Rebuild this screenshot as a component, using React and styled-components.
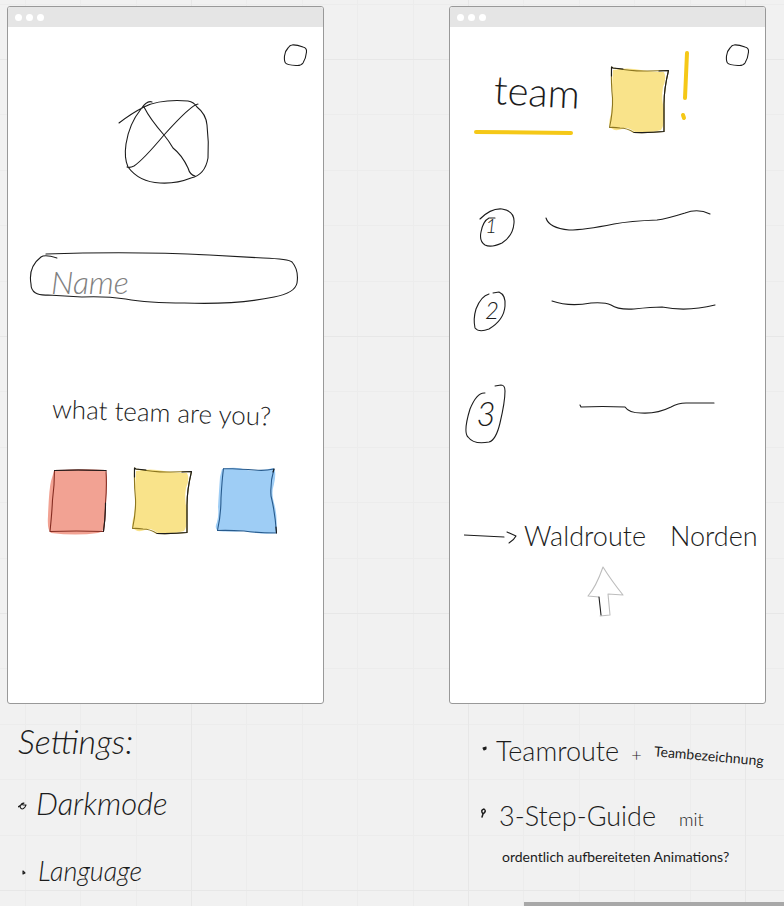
import React from 'react';
import styled, { createGlobalStyle } from 'styled-components';

const INK = '#1c1c1c';
const YELLOW = '#f5c817';

const GlobalStyle = createGlobalStyle`
  *, *::before, *::after { box-sizing: border-box; }
  body {
    margin: 0;
    color: ${INK};
    font-family: Lato, "Open Sans", sans-serif;
    font-weight: 300;
    background-color: #f1f1f1;
  }
`;

const Board = styled.div`
  min-height: 100vh;
  display: flex;
  flex-direction: column;
  background-image:
    linear-gradient(to right, #e7e7e7 1px, transparent 1px),
    linear-gradient(to bottom, #e7e7e7 1px, transparent 1px),
    linear-gradient(to right, transparent 55px, #ececec 55px 56px, transparent 56px 111px, #ececec 111px 112px, transparent 112px 166px, #ececec 166px 167px, transparent 167px 222px, #ececec 222px 223px, transparent 223px),
    linear-gradient(to bottom, transparent 55px, #ececec 55px 56px, transparent 56px 111px, #ececec 111px 112px, transparent 112px 166px, #ececec 166px 167px, transparent 167px 222px, #ececec 222px 223px, transparent 223px);
  background-size: 277px 277px;
  background-position: 191px 59px;
`;

const Columns = styled.main`
  display: grid;
  grid-template-columns: 1fr 1fr;
  column-gap: 125px;
  padding: 6px 18px 0 7px;
`;

const Column = styled.section`
  min-width: 0;
`;

const Frame = styled.article`
  border: 1px solid #999;
  border-radius: 3px;
  background: #fff;
  overflow: hidden;
`;

const TitleBar = styled.header`
  display: flex;
  align-items: center;
  gap: 4px;
  height: 20px;
  padding-left: 7px;
  background: #e5e5e5;
`;

const WindowDot = styled.span`
  width: 7px;
  height: 7px;
  border-radius: 50%;
  background: #fff;
`;

const Screen = styled.div`
  display: flex;
  flex-direction: column;
  min-height: 676px;
  padding: 16px 15px 0 14px;
`;

const Drawing = styled.svg`
  display: block;
  flex: none;
  fill: none;
  stroke: ${(p) => p.$ink || INK};
  stroke-width: 1.1;
  stroke-linecap: round;
  stroke-linejoin: round;
`;

const PlainButton = styled.button`
  flex: none;
  padding: 0;
  border: 0;
  background: none;
  cursor: pointer;
`;

const TopRow = styled.div`
  display: flex;
  justify-content: flex-end;
`;

const LogoRow = styled.div`
  display: flex;
  justify-content: center;
  margin-top: 31px;
`;

const Field = styled.label`
  display: grid;
  margin: 64px 9px 0 6px;
  > * { grid-area: 1 / 1; }
`;

const NameInput = styled.input`
  width: 100%;
  height: 54px;
  padding: 8px 23px 0;
  border: 0;
  outline: 0;
  background: none;
  color: ${INK};
  font: italic 300 32px Lato, sans-serif;
  &::placeholder { color: #808080; opacity: 1; }
`;

const Question = styled.h2`
  margin: 92px 30px 0 30px;
  font-size: 26px;
  font-weight: 300;
  line-height: 32px;
  white-space: nowrap;
  transform: rotate(2deg);
`;

const Swatches = styled.div`
  display: flex;
  gap: 18px;
  margin: 37px 0 0 24px;
`;

const TitleRow = styled.div`
  display: flex;
  align-items: flex-start;
  padding-left: 10px;
`;

const TeamTitle = styled.h1`
  margin: 26px 0 0;
  padding-left: 20px;
  width: 112px;
  font-size: 40px;
  font-weight: 300;
  line-height: 44px;
  transform: rotate(3deg);
`;

const Underline = styled.div`
  margin-top: 14px;
`;

const TitleMark = styled.div`
  display: flex;
  flex: 1;
  gap: 5px;
  margin-left: 21px;
`;

const MarkSwatch = styled.div`
  margin-top: 21px;
`;

const Steps = styled.ol`
  display: grid;
  gap: 20px;
  margin: 54px 0 0;
  padding: 0;
  list-style: none;
`;

const Step = styled.li`
  display: flex;
  gap: 22px;
`;

const StepNumber = styled.text`
  fill: ${INK};
  stroke: none;
  font-size: ${(p) => p.$size}px;
  font-style: italic;
  text-anchor: middle;
`;

const Route = styled.a`
  display: flex;
  align-items: center;
  gap: 6px;
  margin-top: 74px;
  color: inherit;
  font-size: 27px;
  line-height: 32px;
  white-space: nowrap;
  text-decoration: none;
`;

const RouteName = styled.span`
  display: flex;
  gap: 24px;
`;

const Pointer = styled.div`
  display: flex;
  justify-content: center;
  margin-top: 12px;
  padding-right: 2px;
`;

const Notes = styled.div`
  padding: ${(p) => p.$top}px 0 0 ${(p) => p.$left}px;
  white-space: nowrap;
`;

const NotesTitle = styled.h2`
  margin: 0 0 22px;
  font-size: 34px;
  font-style: italic;
  font-weight: 300;
  line-height: 40px;
`;

const NoteList = styled.ul`
  display: grid;
  gap: ${(p) => p.$gap}px;
  margin: 0;
  padding: 0;
  list-style: none;
`;

const Note = styled.li`
  display: flex;
  gap: ${(p) => p.$gap}px;
  font-size: ${(p) => p.$size}px;
  font-style: ${(p) => (p.$italic ? 'italic' : 'normal')};
  line-height: 40px;
`;

const NoteLine = styled.div`
  display: flex;
  align-items: baseline;
  gap: ${(p) => p.$gap}px;
`;

const Aside = styled.span`
  font-size: ${(p) => p.$size || 18}px;
  font-weight: ${(p) => (p.$size ? 400 : 300)};
`;

const Slanted = styled(Aside)`
  transform: rotate(5deg);
`;

const Detail = styled.p`
  margin: 6px 0 0 3px;
  font-size: 14px;
  font-weight: 400;
  line-height: 24px;
`;

const ScrollTrack = styled.div`
  align-self: flex-end;
  width: 260px;
  height: 4px;
  margin-top: auto;
  background: #a8a8a8;
`;

function Window({ children }) {
  return (
    <Frame>
      <TitleBar><WindowDot /><WindowDot /><WindowDot /></TitleBar>
      <Screen>{children}</Screen>
    </Frame>
  );
}

function SettingsButton() {
  return (
    <PlainButton type="button" aria-label="Settings">
      <Drawing width="26" height="24" viewBox="0 0 26 24">
        <path d="M10 2 Q14 1.500 21 4 Q25 5 24.500 9 Q24 15 21 20 Q19 23 14 22.500 Q5 22 3.500 20 Q2 18 2.500 13 Q3 8 6 5 Q8 2 10 2Z" />
      </Drawing>
    </PlainButton>
  );
}

const SWATCHES = {
  red: {
    fill: '#f2a293',
    paint: 'M8 6 Q30 3 58 5 Q61 6 61 18 Q60 40 59 56 Q59 67 52 68 Q30 71 5 68 Q1 65 2 51 Q3 24 5 16 Z',
    line: 'M8.500 5.500 Q30 4.500 60 5.500 Q61 22 59.500 38 Q59.500 52 57.500 66.500 Q30 65.500 4 66.500 Q6 47 6.500 35 Q8.500 20 8.500 5.500',
    edge: '#852d22',
    front: 'M8.500 5.500 Q30 4.500 60 5.500 M59.500 38 Q59.500 52 57.500 66.500',
  },
  yellow: {
    fill: '#f9e38a',
    paint: 'M6 6 Q20 3 34 6 Q48 8 57 8 Q60 14 56 23 Q54 35 57 45 Q58 61 54 66 Q44 69 28 68 Q20 62 15 65 Q7 68 3 63 Q1 60 4 50 Q6 35 5 22 Z',
    line: 'M4.500 3 L6 4 Q26 7.500 40 7 L61.500 6.500 Q57 25 57 40 L57 67.500 Q43 69 27 68.500 Q20 64 13 64 Q7 63 2.500 63.500 Q6 48 5.500 34 Q4 20 4.500 3',
    edge: '#8d7720',
    front: 'M52 7 L61.500 6.500 Q57 25 57 40 L57 67.500 Q43 69 27 68.500 M4.500 12 L4.500 3 L6 4 L16 5',
  },
  blue: {
    fill: '#9ecdf5',
    paint: 'M8 4 Q23 1 32 5 Q48 6 59 3 Q63 5 60 19 Q57 28 60 38 Q64 51 62 68 Q49 70 30 66 Q14 67 4 66 Q0 64 3 57 Q5 50 4 42 Q5 25 6 12 Z',
    line: 'M9.500 3.500 Q28 4 41 5 Q50 6 60 4 Q56 17 57 31 Q61 47 62.500 68 Q43 68 30 66 Q14 65 3.500 65.500 Q7 50 7 33 Q8 15 9.500 3.500',
    edge: '#285b8d',
    front: 'M59 7 L60 4 M62 62 L62.500 68',
  },
};

function Swatch({ color }) {
  const s = SWATCHES[color];
  return (
    <Drawing width="66" height="72" viewBox="0 0 66 72">
      <path d={s.paint} fill={s.fill} stroke="none" />
      <path d={s.line} stroke={s.edge} />
      <path d={s.front} />
    </Drawing>
  );
}

const STEPS = [
  {
    number: '1', x: 27, y: 43, size: 20,
    ring: 'M16 29 Q27 18 38 19 Q51 21 50 33 Q49 46 38 53 Q27 58 21 55 Q15 51 17 42 Q19 31 25 28 L31 28',
    line: 'M8 28 Q11 38 31 40 Q46 40 76 34 Q92 31 119 30 Q128 29 147 23 Q160 18 172 24',
  },
  {
    number: '2', x: 28, y: 37, size: 24,
    ring: 'M25 12 Q17 14 12 27 Q9 37 11 46 Q15 51 25 47 Q40 38 41 24 Q42 13 35 10 L29 11',
    line: 'M14 19 Q31 25 53 21 Q67 20 73 23 Q80 28 96 27 Q114 25 124 25 Q149 30 177 23',
  },
  {
    number: '3', x: 22, y: 52, size: 33,
    ring: 'M21 19 Q13 18 6 35 Q-1 58 4 63 Q10 71 25 68 Q32 66 36 49 Q41 28 41 17 Q41 11 37 11 L31 12',
    line: 'M42 31 L43 33 Q64 32 87 33 Q91 39 103 39 Q119 40 133 33 Q140 29 148 29 L176 29',
  },
];

export default function App() {
  return (
    <>
      <GlobalStyle />
      <Board>
        <Columns>
          <Column>
            <Window>
              <TopRow><SettingsButton /></TopRow>
              <LogoRow>
                <Drawing width="94" height="88" viewBox="0 0 94 88" role="img" aria-label="Logo">
                  <path d="M1 25 Q14 15 26 9 C40 2 57 2 70 3 Q76 4 79 9 Q88 16 89 27 Q91 44 90 60 Q87 77 73 80 Q58 86 42 85 Q21 84 10 69 Q6 60 8 46 Q11 26 23 11 Q29 2 34 4" />
                  <path d="M26 9 Q32 21 46 37 Q51 43 55 50 Q64 57 70 70 Q72 77 77 78 M80 6 Q73 7 46 37 Q25 62 16 68 Q12 70 9 69" />
                </Drawing>
              </LogoRow>
              <Field>
                <Drawing width="100%" height="54" viewBox="0 0 272 54" preserveAspectRatio="none" aria-hidden="true">
                  <path d="M18 4 Q106 1 182 5 L236 8 Q262 9 265 12 Q272 20 270 33 Q268 43 247 47 Q208 55 157 53 Q120 53 98 49 Q78 46 54 47 L20 45 Q3 46 3 34 Q0 17 13 7 Q17 4 29 8" />
                </Drawing>
                <NameInput type="text" placeholder="Name" aria-label="Name" />
              </Field>
              <Question>what team are you?</Question>
              <Swatches>
                {Object.keys(SWATCHES).map((color) => (
                  <PlainButton key={color} type="button" aria-label={`${color} team`}>
                    <Swatch color={color} />
                  </PlainButton>
                ))}
              </Swatches>
            </Window>
            <Notes $top={17} $left={11}>
              <NotesTitle>Settings:</NotesTitle>
              <NoteList $gap={28}>
                <Note $size={31} $gap={8} $italic>
                  <Drawing width="10" height="40" viewBox="0 0 10 40" aria-hidden="true">
                    <path d="M0 24 L6 20 Q3 20 2 24 Q4 28 7 24 L8 22 L5 22" />
                  </Drawing>
                  Darkmode
                </Note>
                <Note $size={27} $gap={10} $italic>
                  <Drawing width="10" height="40" viewBox="0 0 10 40" aria-hidden="true">
                    <path d="M5 20 L5 23 L7 22 Z" />
                  </Drawing>
                  Language
                </Note>
              </NoteList>
            </Notes>
          </Column>

          <Column>
            <Window>
              <TitleRow>
                <div>
                  <TeamTitle>team</TeamTitle>
                  <Underline>
                    <Drawing width="100" height="8" viewBox="0 0 100 8" aria-hidden="true">
                      <path d="M2 5 L97 6" stroke={YELLOW} strokeWidth="4" />
                    </Drawing>
                  </Underline>
                </div>
                <TitleMark>
                  <MarkSwatch><Swatch color="yellow" /></MarkSwatch>
                  <Drawing width="16" height="82" viewBox="0 0 16 82" aria-hidden="true">
                    <path d="M9 10 L7 55 M5 72 L6 75" stroke={YELLOW} strokeWidth="4" />
                  </Drawing>
                </TitleMark>
                <SettingsButton />
              </TitleRow>
              <Steps>
                {STEPS.map((s) => (
                  <Step key={s.number}>
                    <Drawing width="52" height="72" viewBox="0 0 52 72">
                      <path d={s.ring} />
                      <StepNumber x={s.x} y={s.y} $size={s.size}>{s.number}</StepNumber>
                    </Drawing>
                    <Drawing width="180" height="72" viewBox="0 0 180 72" aria-hidden="true">
                      <path d={s.line} />
                    </Drawing>
                  </Step>
                ))}
              </Steps>
              <Route href="#route">
                <Drawing width="54" height="20" viewBox="0 0 54 20" aria-hidden="true">
                  <path d="M0 9 L40 11 M43 6 L52 10 Q50 14 45 17" />
                </Drawing>
                <RouteName><span>Waldroute</span><span>Norden</span></RouteName>
              </Route>
              <Pointer>
                <Drawing width="40" height="56" viewBox="0 0 40 56" $ink="#bdbdbd" aria-hidden="true">
                  <path d="M13 33 L2 32 Q10 23 17 3 Q25 16 37 31 L22 30 L24 51 L14 52" />
                  <path d="M13 33 L15 51" stroke={INK} />
                </Drawing>
              </Pointer>
            </Window>
            <Notes $top={27} $left={31}>
              <NoteList $gap={20}>
                <Note $size={27} $gap={6}>
                  <Drawing width="10" height="40" viewBox="0 0 10 40" aria-hidden="true">
                    <path d="M3 17 L6 16 L6 18 L4 19 Z" fill={INK} />
                  </Drawing>
                  <NoteLine $gap={12}>
                    <span>Teamroute</span>
                    <Aside>+</Aside>
                    <Slanted $size={14}>Teambezeichnung</Slanted>
                  </NoteLine>
                </Note>
                <Note $size={27} $gap={9}>
                  <Drawing width="10" height="40" viewBox="0 0 10 40" aria-hidden="true">
                    <path d="M3 18 Q0 14 4 13 Q7 15 3 18 L2 21" strokeWidth="1.500" />
                  </Drawing>
                  <div>
                    <NoteLine $gap={23}>
                      <span>3-Step-Guide</span>
                      <Aside>mit</Aside>
                    </NoteLine>
                    <Detail>ordentlich aufbereiteten Animations?</Detail>
                  </div>
                </Note>
              </NoteList>
            </Notes>
          </Column>
        </Columns>
        <ScrollTrack />
      </Board>
    </>
  );
}
